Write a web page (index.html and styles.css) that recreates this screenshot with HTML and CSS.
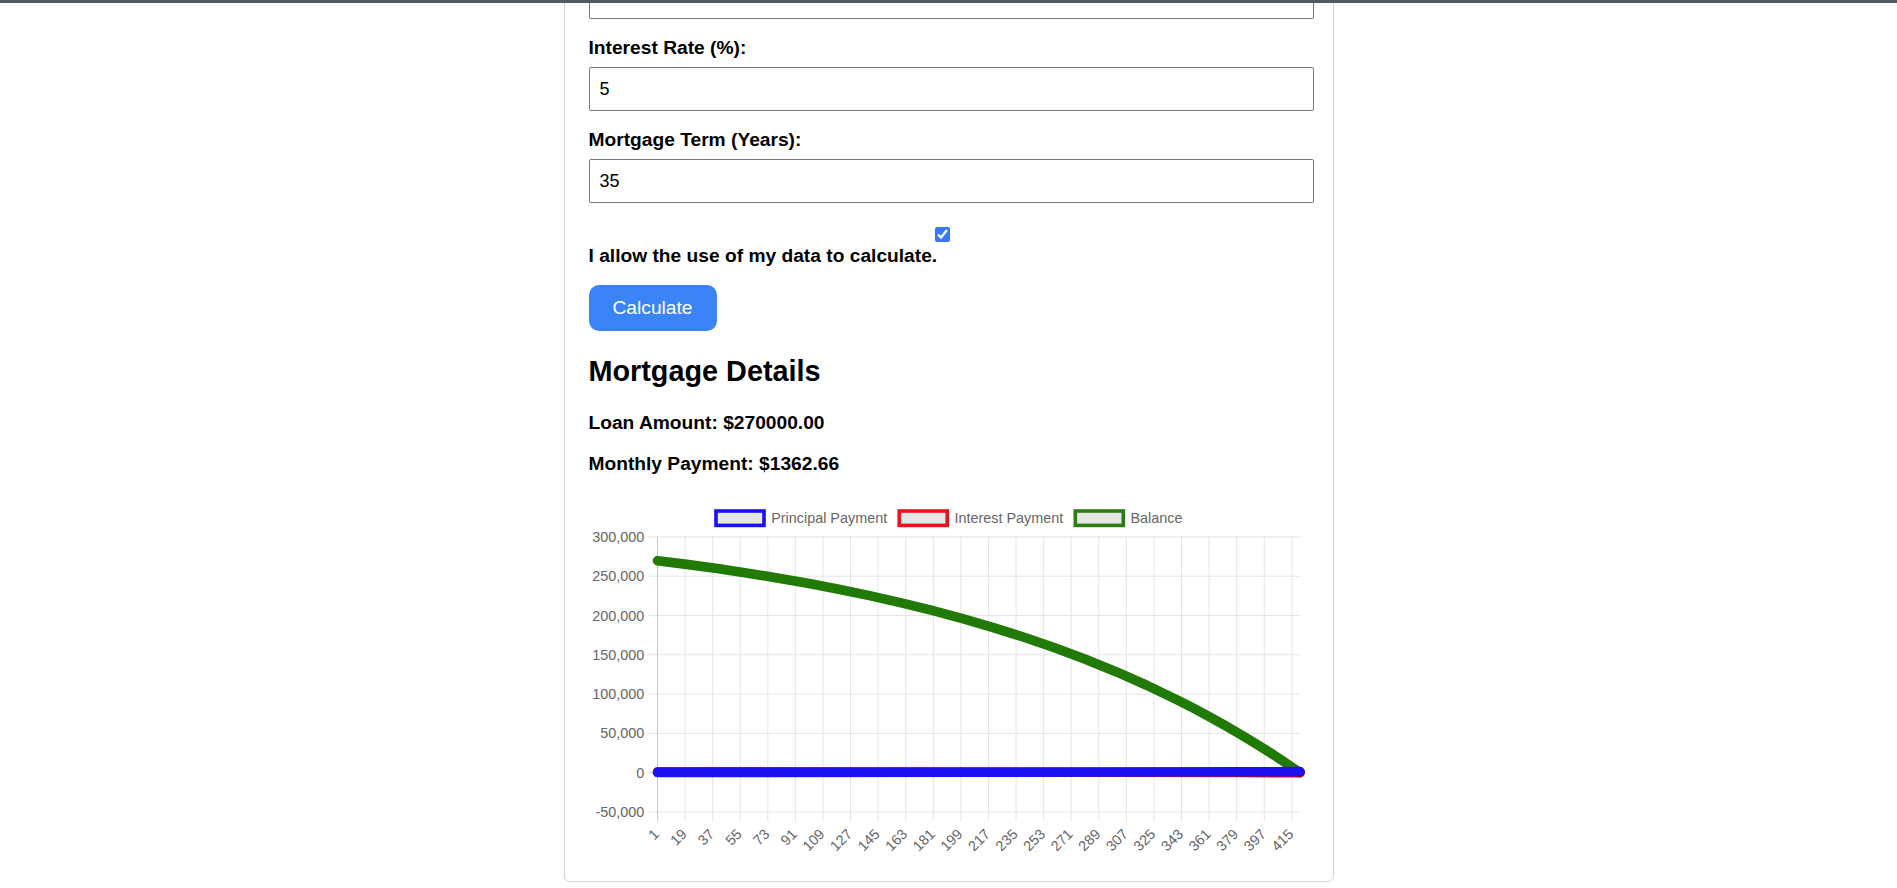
FILE: index.html
```html
<!DOCTYPE html>
<html lang="en">
<head>
<meta charset="utf-8">
<title>Mortgage Calculator</title>
<link rel="stylesheet" href="styles.css">
</head>
<body>
<div class="topbar"></div>
<main class="card">
  <div class="group">
    <input class="field" type="text" value="">
  </div>
  <div class="group">
    <label class="label">Interest Rate (%):</label>
    <input class="field" type="text" value="5">
  </div>
  <div class="group">
    <label class="label">Mortgage Term (Years):</label>
    <input class="field" type="text" value="35">
  </div>
  <input class="consent-box" type="checkbox" checked>
  <p class="consent-text">I allow the use of my data to calculate.</p>
  <button class="btn">Calculate</button>

  <h2 class="title">Mortgage Details</h2>
  <p class="detail">Loan Amount: $270000.00</p>
  <p class="detail">Monthly Payment: $1362.66</p>

  <svg class="chart" width="720" height="363" viewBox="0 0 720 363" xmlns="http://www.w3.org/2000/svg">
    <g class="legend">
      <rect x="127" y="17" width="48" height="14.4" fill="#e6e6e6" stroke="#1a12ee" stroke-width="3.6"/>
      <text x="182.2" y="24" class="lg">Principal Payment</text>
      <rect x="310.2" y="17" width="48" height="14.4" fill="#e6e6e6" stroke="#e8141c" stroke-width="3.6"/>
      <text x="365.4" y="24" class="lg">Interest Payment</text>
      <rect x="486.3" y="17" width="48" height="14.4" fill="#e6e6e6" stroke="#2b7d12" stroke-width="3.6"/>
      <text x="541.5" y="24" class="lg">Balance</text>
    </g>
    <g stroke="#e4e4e4" stroke-width="1">
      <line x1="59.7" y1="42.9" x2="711.3" y2="42.9"/>
      <line x1="59.7" y1="82.2" x2="711.3" y2="82.2"/>
      <line x1="59.7" y1="121.5" x2="711.3" y2="121.5"/>
      <line x1="59.7" y1="160.8" x2="711.3" y2="160.8"/>
      <line x1="59.7" y1="200.1" x2="711.3" y2="200.1"/>
      <line x1="59.7" y1="239.4" x2="711.3" y2="239.4"/>
      <line x1="59.7" y1="278.7" x2="711.3" y2="278.7" stroke="#c4c4c4"/>
      <line x1="59.7" y1="318" x2="711.3" y2="318"/>
      <line x1="68.5" y1="42.9" x2="68.5" y2="327.6" stroke="#c8c8c8"/>
      <line x1="96.08" y1="42.9" x2="96.08" y2="327.6"/>
      <line x1="123.66" y1="42.9" x2="123.66" y2="327.6"/>
      <line x1="151.24" y1="42.9" x2="151.24" y2="327.6"/>
      <line x1="178.82" y1="42.9" x2="178.82" y2="327.6"/>
      <line x1="206.4" y1="42.9" x2="206.4" y2="327.6"/>
      <line x1="233.98" y1="42.9" x2="233.98" y2="327.6"/>
      <line x1="261.56" y1="42.9" x2="261.56" y2="327.6"/>
      <line x1="289.14" y1="42.9" x2="289.14" y2="327.6"/>
      <line x1="316.72" y1="42.9" x2="316.72" y2="327.6"/>
      <line x1="344.3" y1="42.9" x2="344.3" y2="327.6"/>
      <line x1="371.88" y1="42.9" x2="371.88" y2="327.6"/>
      <line x1="399.46" y1="42.9" x2="399.46" y2="327.6"/>
      <line x1="427.04" y1="42.9" x2="427.04" y2="327.6"/>
      <line x1="454.62" y1="42.9" x2="454.62" y2="327.6"/>
      <line x1="482.2" y1="42.9" x2="482.2" y2="327.6"/>
      <line x1="509.78" y1="42.9" x2="509.78" y2="327.6"/>
      <line x1="537.36" y1="42.9" x2="537.36" y2="327.6"/>
      <line x1="564.94" y1="42.9" x2="564.94" y2="327.6"/>
      <line x1="592.52" y1="42.9" x2="592.52" y2="327.6"/>
      <line x1="620.1" y1="42.9" x2="620.1" y2="327.6"/>
      <line x1="647.68" y1="42.9" x2="647.68" y2="327.6"/>
      <line x1="675.26" y1="42.9" x2="675.26" y2="327.6"/>
      <line x1="702.84" y1="42.9" x2="702.84" y2="327.6"/>
    </g>
    <g class="ylabels">
      <text x="55.3" y="42.9">300,000</text>
      <text x="55.3" y="82.2">250,000</text>
      <text x="55.3" y="121.5">200,000</text>
      <text x="55.3" y="160.8">150,000</text>
      <text x="55.3" y="200.1">100,000</text>
      <text x="55.3" y="239.4">50,000</text>
      <text x="55.3" y="278.7">0</text>
      <text x="55.3" y="318">-50,000</text>
    </g>
    <g class="xlabels">
      <text transform="translate(67.5 337.5) rotate(-45)">1</text>
      <text transform="translate(95.08 337.5) rotate(-45)">19</text>
      <text transform="translate(122.66 337.5) rotate(-45)">37</text>
      <text transform="translate(150.24 337.5) rotate(-45)">55</text>
      <text transform="translate(177.82 337.5) rotate(-45)">73</text>
      <text transform="translate(205.4 337.5) rotate(-45)">91</text>
      <text transform="translate(232.98 337.5) rotate(-45)">109</text>
      <text transform="translate(260.56 337.5) rotate(-45)">127</text>
      <text transform="translate(288.14 337.5) rotate(-45)">145</text>
      <text transform="translate(315.72 337.5) rotate(-45)">163</text>
      <text transform="translate(343.3 337.5) rotate(-45)">181</text>
      <text transform="translate(370.88 337.5) rotate(-45)">199</text>
      <text transform="translate(398.46 337.5) rotate(-45)">217</text>
      <text transform="translate(426.04 337.5) rotate(-45)">235</text>
      <text transform="translate(453.62 337.5) rotate(-45)">253</text>
      <text transform="translate(481.2 337.5) rotate(-45)">271</text>
      <text transform="translate(508.78 337.5) rotate(-45)">289</text>
      <text transform="translate(536.36 337.5) rotate(-45)">307</text>
      <text transform="translate(563.94 337.5) rotate(-45)">325</text>
      <text transform="translate(591.52 337.5) rotate(-45)">343</text>
      <text transform="translate(619.1 337.5) rotate(-45)">361</text>
      <text transform="translate(646.68 337.5) rotate(-45)">379</text>
      <text transform="translate(674.26 337.5) rotate(-45)">397</text>
      <text transform="translate(701.84 337.5) rotate(-45)">415</text>
    </g>
    <g fill="none" stroke-width="9.6" stroke-linecap="round" stroke-linejoin="round">
      <polyline stroke="#217a06" points="68.5,66.67 97.64,70.37 128.31,74.59 158.98,79.18 189.65,84.17 220.32,89.59 250.99,95.49 281.66,101.89 312.33,108.85 343,116.41 373.67,124.63 404.34,133.56 435.01,143.26 465.68,153.81 496.35,165.27 527.02,177.72 557.69,191.26 588.36,205.97 603.7,213.8 619.03,221.95 634.37,230.47 649.7,239.32 665.03,248.58 680.37,258.19 695.7,268.26 711.04,278.7"/>
      <polyline stroke="#e00010" points="68.5,277.82 389,278.08 527,278.28 649.7,278.53 711.04,278.7"/>
      <polyline stroke="#1a12ee" points="68.5,278.51 389,278.25 527,278.05 649.7,277.8 711.04,277.63"/>
    </g>
  </svg>
</main>
</body>
</html>
```

FILE: styles.css
```css
html, body {
  margin: 0;
  padding: 0;
  background: #ffffff;
  overflow: hidden;
}

body {
  font-family: "Liberation Sans", Arial, sans-serif;
  font-size: 19.2px;
  line-height: 22px;
  color: #000;
}

.topbar {
  position: fixed;
  top: 0;
  left: 0;
  right: 0;
  height: 3px;
  background: #505b68;
  z-index: 5;
}

.card {
  box-sizing: border-box;
  width: 770px;
  margin: -50px auto 0;
  padding: 24px 24px 24px;
  border: 1px solid #d2d2d2;
  border-radius: 6px;
  background: #fff;
}

.group {
  margin-bottom: 18px;
}

.label {
  display: block;
  font-weight: bold;
  line-height: 22px;
  margin-bottom: 8px;
}

.field {
  display: block;
  box-sizing: border-box;
  width: 725px;
  height: 44px;
  margin: 0;
  padding: 0 10px;
  border: 1px solid #767676;
  border-radius: 2px;
  font-family: "Liberation Sans", Arial, sans-serif;
  font-size: 18px;
  color: #000;
  background: #fff;
}

.consent-box {
  display: block;
  width: 15px;
  height: 15px;
  margin: 24px 0 0 346px;
  accent-color: #3479f6;
}

.consent-text {
  margin: 3px 0 18px;
  font-weight: bold;
  line-height: 22px;
}

.btn {
  display: block;
  height: 46px;
  margin: 0;
  padding: 0 24px;
  border: none;
  border-radius: 10px;
  background: #3a84f8;
  color: #fff;
  font-family: "Liberation Sans", Arial, sans-serif;
  font-size: 19.2px;
  line-height: 22px;
}

.title {
  margin: 24px 0;
  font-size: 28.8px;
  line-height: 33px;
  font-weight: bold;
}

.detail {
  margin: 19px 0;
  font-weight: bold;
  line-height: 22px;
}

.chart {
  display: block;
}

.chart text {
  font-family: "Liberation Sans", Arial, sans-serif;
  font-size: 14.4px;
  fill: #666;
}

.lg {
  dominant-baseline: central;
}

.ylabels text {
  text-anchor: end;
  dominant-baseline: central;
}

.xlabels text {
  text-anchor: end;
  dominant-baseline: central;
}
```
